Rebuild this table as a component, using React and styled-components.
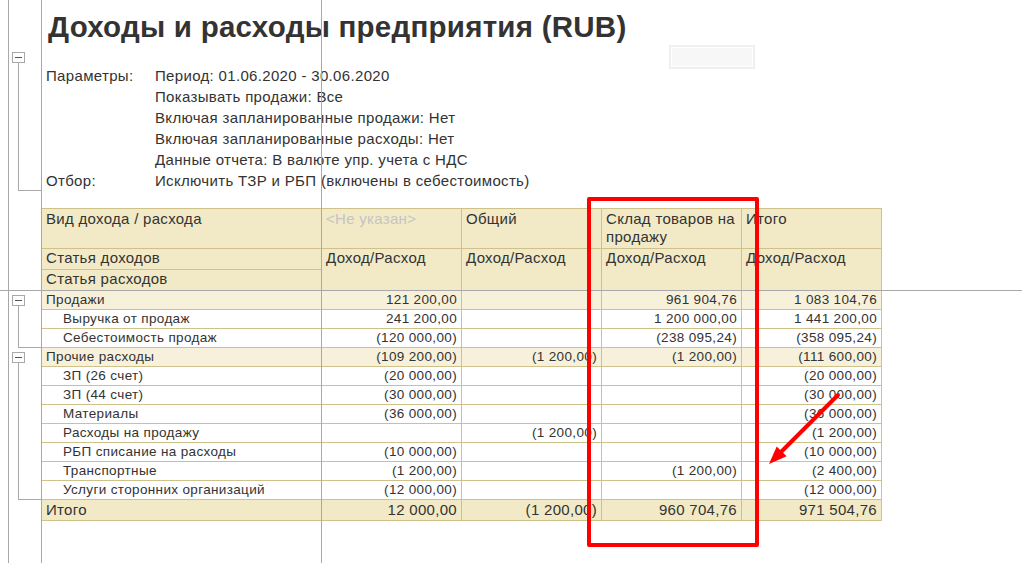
import React from 'react';
import styled, { createGlobalStyle, css } from 'styled-components';

const GlobalStyle = createGlobalStyle`
  html, body {
    margin: 0;
    padding: 0;
    background: #fff;
  }
  body {
    font-family: "Liberation Sans", Arial, sans-serif;
    color: #333;
  }
`;

const BORDER = '#cfc18a';
const GUIDE = '#a8a8a8';

const Page = styled.div`
  position: relative;
  width: 1022px;
  height: 563px;
  overflow: hidden;
`;

const TitleRow = styled.div`
  display: flex;
  align-items: flex-start;
  height: 44px;
  padding: 9px 0 0 48px;
  box-sizing: border-box;
`;

const Title = styled.h1`
  margin: 0;
  font-size: 29.5px;
  letter-spacing: 0.25px;
  line-height: 35px;
  font-weight: bold;
  color: #333;
  white-space: nowrap;
`;

const FieldStub = styled.div`
  flex: none;
  width: 86px;
  height: 24px;
  margin: 36px 0 0 43px;
  box-sizing: border-box;
  border: 2px solid #efefef;
  background: #f7f7f7;
  box-shadow: inset 0 0 0 1px #fff;
`;

const Section = styled.div`
  display: flex;
  margin-top: ${p => p.$gap || 0}px;
`;

const Gutter = styled.div`
  position: relative;
  flex: none;
  width: 41px;
  ${p => p.$tree && css`
    &::after {
      content: '';
      position: absolute;
      left: 18px;
      top: ${p.$top + 11}px;
      bottom: 0;
      width: 23px;
      border-left: 1px solid ${GUIDE};
      border-bottom: 1px solid ${GUIDE};
    }
  `}
`;

const Toggle = styled.div`
  width: 13px;
  height: 11px;
  box-sizing: border-box;
  margin: ${p => p.$top}px 0 0 12px;
  border: 1px solid ${GUIDE};
  background: #fff;
  display: flex;
  align-items: center;
  justify-content: center;
  &::before {
    content: '';
    width: 7px;
    height: 1px;
    background: #555;
  }
`;

const Params = styled.div`
  display: grid;
  grid-template-columns: 109px auto;
  padding: 13px 0 0 5px;
  font-size: 15px;
  letter-spacing: 0.33px;
  line-height: 21px;
  color: #333;
  white-space: nowrap;
`;

const Columns = css`
  display: grid;
  grid-template-columns: 280px repeat(4, 140px);
  border-left: 1px solid ${BORDER};
`;

const HeaderGrid = styled.div`
  ${Columns};
  grid-template-rows: 40px 21px 21px;
  border-top: 1px solid ${BORDER};
  background: #f2eac6;
`;

const HeadCell = styled.div`
  box-sizing: border-box;
  border-right: 1px solid ${BORDER};
  border-bottom: 1px solid ${BORDER};
  padding: ${p => (p.$first ? 1 : 0)}px 4px 0;
  font-size: 15px;
  letter-spacing: 0.3px;
  line-height: 18px;
  color: ${p => (p.$muted ? '#c4c4c4' : '#333')};
  ${p => p.$span && css`grid-row: span 2;`}
`;

const Rows = styled.div`
  display: flex;
  flex-direction: column;
`;

const Row = styled.div`
  ${Columns};
  height: ${p => (p.$kind === 'total' ? 21 : 19)}px;
  background: ${p =>
    p.$kind === 'total' ? '#f2eac6' : p.$kind === 'group' ? '#f7f1dc' : '#fff'};
  font-size: ${p => (p.$kind === 'total' ? 15 : 13.5)}px;
  letter-spacing: ${p => (p.$kind === 'total' ? 0.3 : 0.35)}px;
  line-height: ${p => (p.$kind === 'total' ? 20 : 18)}px;
`;

const Cell = styled.div`
  box-sizing: border-box;
  border-right: 1px solid ${BORDER};
  border-bottom: 1px solid ${BORDER};
  padding: 0 4px 0 ${p => (p.$indent ? 21 : 4)}px;
  text-align: ${p => (p.$num ? 'right' : 'left')};
  white-space: nowrap;
  color: #333;
`;

const VGuide = styled.div`
  position: absolute;
  top: 0;
  bottom: 0;
  left: ${p => p.$x}px;
  width: 1px;
  background: ${GUIDE};
`;

const HGuide = styled.div`
  position: absolute;
  left: 0;
  right: 0;
  top: ${p => p.$y}px;
  height: 1px;
  background: ${GUIDE};
`;

const RedFrame = styled.div`
  position: absolute;
  left: 587px;
  top: 197px;
  width: 172px;
  height: 350px;
  box-sizing: border-box;
  border: 4px solid #ff0000;
  border-radius: 2px;
`;

const Arrow = styled.svg`
  position: absolute;
  left: 760px;
  top: 385px;
`;

const params = [
  ['Параметры:', 'Период: 01.06.2020 - 30.06.2020'],
  ['', 'Показывать продажи: Все'],
  ['', 'Включая запланированные продажи: Нет'],
  ['', 'Включая запланированные расходы: Нет'],
  ['', 'Данные отчета: В валюте упр. учета с НДС'],
  ['Отбор:', 'Исключить ТЗР и РБП (включены в себестоимость)'],
];

const groups = [
  {
    name: 'Продажи',
    values: ['121 200,00', '', '961 904,76', '1 083 104,76'],
    items: [
      ['Выручка от продаж', '241 200,00', '', '1 200 000,00', '1 441 200,00'],
      ['Себестоимость продаж', '(120 000,00)', '', '(238 095,24)', '(358 095,24)'],
    ],
  },
  {
    name: 'Прочие расходы',
    values: ['(109 200,00)', '(1 200,00)', '(1 200,00)', '(111 600,00)'],
    items: [
      ['ЗП (26 счет)', '(20 000,00)', '', '', '(20 000,00)'],
      ['ЗП (44 счет)', '(30 000,00)', '', '', '(30 000,00)'],
      ['Материалы', '(36 000,00)', '', '', '(36 000,00)'],
      ['Расходы на продажу', '', '(1 200,00)', '', '(1 200,00)'],
      ['РБП списание на расходы', '(10 000,00)', '', '', '(10 000,00)'],
      ['Транспортные', '(1 200,00)', '', '(1 200,00)', '(2 400,00)'],
      ['Услуги сторонних организаций', '(12 000,00)', '', '', '(12 000,00)'],
    ],
  },
];

const total = ['12 000,00', '(1 200,00)', '960 704,76', '971 504,76'];

function DataRow({ kind, label, values, indent }) {
  return (
    <Row $kind={kind}>
      <Cell $indent={indent}>{label}</Cell>
      {values.map((v, i) => (
        <Cell key={i} $num>{v}</Cell>
      ))}
    </Row>
  );
}

export default function App() {
  return (
    <Page>
      <GlobalStyle />
      <TitleRow>
        <Title>Доходы и расходы предприятия (RUB)</Title>
        <FieldStub />
      </TitleRow>

      <Section $gap={8}>
        <Gutter $tree $top={0}>
          <Toggle $top={0} />
        </Gutter>
        <Params>
          {params.map(([k, v], i) => (
            <React.Fragment key={i}>
              <span>{k}</span>
              <span>{v}</span>
            </React.Fragment>
          ))}
        </Params>
      </Section>

      <Section $gap={17}>
        <Gutter />
        <HeaderGrid>
          <HeadCell $first>Вид дохода / расхода</HeadCell>
          <HeadCell $first $muted>&lt;Не указан&gt;</HeadCell>
          <HeadCell $first>Общий</HeadCell>
          <HeadCell $first>Склад товаров на продажу</HeadCell>
          <HeadCell $first>Итого</HeadCell>
          <HeadCell>Статья доходов</HeadCell>
          <HeadCell $span>Доход/Расход</HeadCell>
          <HeadCell $span>Доход/Расход</HeadCell>
          <HeadCell $span>Доход/Расход</HeadCell>
          <HeadCell $span>Доход/Расход</HeadCell>
          <HeadCell>Статья расходов</HeadCell>
        </HeaderGrid>
      </Section>

      {groups.map(g => (
        <Section key={g.name}>
          <Gutter $tree $top={4}>
            <Toggle $top={4} />
          </Gutter>
          <Rows>
            <DataRow kind="group" label={g.name} values={g.values} />
            {g.items.map(([label, ...vals]) => (
              <DataRow key={label} kind="item" label={label} values={vals} indent />
            ))}
          </Rows>
        </Section>
      ))}

      <Section>
        <Gutter />
        <DataRow kind="total" label="Итого" values={total} />
      </Section>

      <VGuide $x={8} />
      <VGuide $x={41} />
      <VGuide $x={321} />
      <HGuide $y={290} />

      <RedFrame />
      <Arrow width="90" height="90" viewBox="0 0 90 90">
        <line x1="78" y1="10" x2="18" y2="70" stroke="#ff0000" strokeWidth="4" strokeLinecap="round" />
        <polygon points="9,79 16.7,61.4 26.6,71.3" fill="#ff0000" />
      </Arrow>
    </Page>
  );
}
